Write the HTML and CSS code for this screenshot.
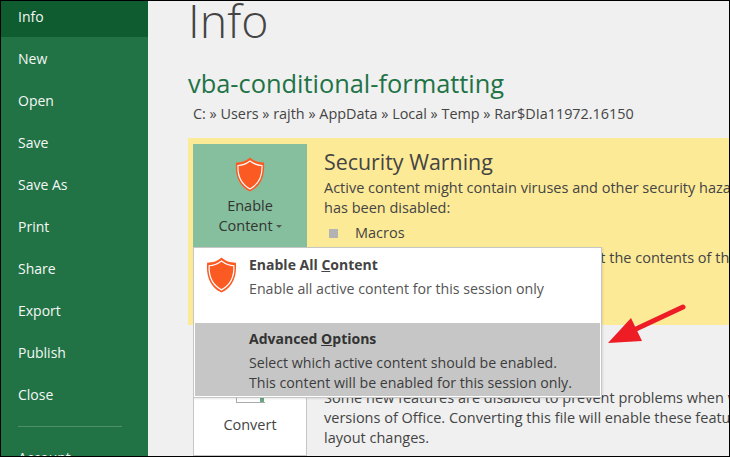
FILE: index.html
```html
<!DOCTYPE html>
<html>

<head>
    <title>Info</title>
    <link rel="stylesheet" href="styles.css">
</head>

<body>
    <div class="frame">
        <div class="sidebar">
            <div class="nav-item active">Info</div>
            <div class="nav-item">New</div>
            <div class="nav-item">Open</div>
            <div class="nav-item">Save</div>
            <div class="nav-item">Save As</div>
            <div class="nav-item">Print</div>
            <div class="nav-item">Share</div>
            <div class="nav-item">Export</div>
            <div class="nav-item">Publish</div>
            <div class="nav-item">Close</div>
            <div class="nav-rule"></div>
            <div class="nav-item">Account</div>
        </div>
        <div class="main">
            <h1 class="title">Info</h1>
            <h2 class="file-name">vba-conditional-formatting</h2>
            <div class="path">C: » Users » rajth » AppData » Local » Temp » Rar$DIa11972.16150</div>

            <div class="banner">
                <div class="enable-btn">
                    <svg class="shield-large" viewBox="0 0 30 35">
                        <path class="shield-fill" d="M15 0.500 C19 4 23 5.500 29 5.500 C30 17 27 29 15 34.500 C3 29 0 17 1 5.500 C7 5.500 11 4 15 0.500 Z" />
                        <path class="shield-line" d="M15 4 C19 7 23 8.500 27 8.500 C27.500 18 25 26.500 15 32 C5 26.500 2.500 18 3 8.500 C7 8.500 11 7 15 4 Z" />
                    </svg>
                    <div class="enable-label">Enable<br>Content<span class="caret"></span></div>
                </div>
                <div class="banner-text">
                    <h3 class="banner-title">Security Warning</h3>
                    <p class="banner-copy">Active content might contain viruses and other security hazards. The following content<br>has been disabled:</p>
                    <div class="bullet"><span class="bullet-box"></span>Macros</div>
                    <p class="banner-copy trust">Only enable this content if you trust the contents of the file.</p>
                </div>
            </div>

            <div class="compat">
                <div class="convert-btn">
                    <div class="convert-icon"><span class="convert-mark"></span></div>
                    <div class="convert-label">Convert</div>
                </div>
                <div class="compat-text">Some new features are disabled to prevent problems when working with older<br>versions of Office. Converting this file will enable these features, but may result in<br>layout changes.</div>
            </div>
        </div>

        <div class="menu">
            <div class="menu-item">
                <svg class="shield-small" viewBox="0 0 30 35">
                    <path class="shield-fill" d="M15 0.500 C19 4 23 5.500 29 5.500 C30 17 27 29 15 34.500 C3 29 0 17 1 5.500 C7 5.500 11 4 15 0.500 Z" />
                    <path class="shield-line" d="M15 4 C19 7 23 8.500 27 8.500 C27.500 18 25 26.500 15 32 C5 26.500 2.500 18 3 8.500 C7 8.500 11 7 15 4 Z" />
                </svg>
                <div class="menu-title">Enable All <u>C</u>ontent</div>
                <div class="menu-desc">Enable all active content for this session only</div>
            </div>
            <div class="menu-item hover">
                <div class="menu-title">Advanced <u>O</u>ptions</div>
                <div class="menu-desc">Select which active content should be enabled.<br>This content will be enabled for this session only.</div>
            </div>
        </div>

        <svg class="arrow" viewBox="0 0 80 45">
            <path d="M75 3 L28 25" />
            <polygon points="0,39 23,14 34,37" />
        </svg>
    </div>
</body>

</html>
```

FILE: styles.css
```css
html,
body {
    height: 100%;
    margin: 0;
    padding: 0;
}

body {
    font-family: "Open Sans", "Noto Sans", sans-serif;
    color: #444;
}

.frame {
    position: relative;
    display: flex;
    box-sizing: border-box;
    width: 730px;
    height: 457px;
    border: 1px solid #000;
    overflow: hidden;
    background-color: #f0f0f0;
}

.sidebar {
    width: 147px;
    flex-shrink: 0;
    background-color: #217346;
    color: #f4f8f5;
    font-size: 14px;
}

.nav-item {
    height: 42px;
    line-height: 42px;
    padding-left: 17px;
}

.nav-item.active {
    height: 36px;
    line-height: 32px;
    margin-bottom: 1px;
    background-color: #0e5c2f;
}

.nav-rule {
    height: 1px;
    margin: 10px 26px 10px 17px;
    background-color: #4d9068;
}

.main {
    flex: 1;
    min-width: 0;
    padding-left: 40px;
}

.title {
    margin: -14px 0 0 0;
    height: 81px;
    font-size: 46.500px;
    line-height: 66px;
    font-weight: 300;
    color: #444;
}

.file-name {
    margin: 0;
    height: 30px;
    font-size: 25.400px;
    line-height: 30px;
    font-weight: 400;
    color: #217346;
    white-space: nowrap;
}

.path {
    margin: 6px 0 0 5px;
    height: 20px;
    font-size: 14.400px;
    line-height: 20px;
    white-space: nowrap;
}

.banner {
    display: flex;
    margin-top: 14px;
    width: 542px;
    height: 187px;
    padding: 6px 0 0 5px;
    box-sizing: border-box;
    background-color: #fdea97;
    overflow: hidden;
}

.enable-btn {
    width: 114px;
    height: 181px;
    flex-shrink: 0;
    background-color: #86bf9d;
    text-align: center;
    color: #333;
    font-size: 14.500px;
    line-height: 20px;
}

.shield-large {
    display: block;
    width: 30px;
    height: 35px;
    margin: 13px auto 4px;
}

.shield-small {
    position: absolute;
    left: 11px;
    top: 8px;
    width: 31px;
    height: 36px;
}

.shield-fill {
    fill: #fb5a22;
}

.shield-line {
    fill: none;
    stroke: #fff;
    stroke-width: 1.200;
}

.caret {
    display: inline-block;
    margin: 0 0 3px 3px;
    border-left: 3px solid transparent;
    border-right: 3px solid transparent;
    border-top: 3px solid #555;
}

.banner-text {
    margin-left: 17px;
    min-width: 0;
    white-space: nowrap;
}

.banner-title {
    margin: 2px 0 0 0;
    font-size: 21.400px;
    line-height: 32px;
    font-weight: 400;
}

.banner-copy {
    margin: 0;
    font-size: 14.500px;
    line-height: 20px;
}

.bullet {
    display: flex;
    align-items: center;
    margin-top: 3px;
    font-size: 14.500px;
    line-height: 24px;
}

.bullet-box {
    width: 9px;
    height: 9px;
    margin: 0 17px 0 5px;
    background-color: #b3b3b3;
}

.trust {
    margin-top: 3px;
    text-indent: 40px;
}

.compat {
    display: flex;
    margin-top: 20px;
}

.convert-btn {
    width: 114px;
    height: 111px;
    margin-left: 5px;
    flex-shrink: 0;
    box-sizing: border-box;
    border: 1px solid #c6c6c6;
    background-color: #fff;
    text-align: center;
}

.convert-icon {
    display: flex;
    justify-content: flex-end;
    align-items: flex-end;
    box-sizing: border-box;
    width: 29px;
    height: 30px;
    margin: 27px auto 0;
    border-bottom: 1px solid #aaa;
    border-left: 1px solid #aaa;
}

.convert-mark {
    width: 4px;
    height: 6px;
    margin-right: 1px;
    background-color: #6aa884;
}

.convert-label {
    margin-top: 12px;
    font-size: 14.500px;
    line-height: 20px;
}

.compat-text {
    margin-left: 17px;
    margin-top: 43px;
    font-size: 14.500px;
    line-height: 20px;
    white-space: nowrap;
}

.menu {
    position: absolute;
    left: 192px;
    top: 246px;
    width: 409px;
    height: 151px;
    box-sizing: border-box;
    border: 1px solid #c6c6c6;
    padding: 1px;
    background-color: #fff;
    box-shadow: 1px 1px 2px rgba(0, 0, 0, 0.1);
}

.menu-item {
    position: relative;
    box-sizing: border-box;
    height: 74px;
    padding: 5px 0 0 54px;
}

.menu-item.hover {
    height: 73px;
    padding-top: 5px;
    background-color: #c6c6c6;
}

.menu-title {
    font-size: 14px;
    line-height: 22px;
    font-weight: 700;
    color: #444;
}

.hover .menu-title {
    color: #333;
}

.menu-desc {
    margin-top: 3px;
    font-size: 14.200px;
    line-height: 20px;
    color: #555;
    white-space: nowrap;
}

.hover .menu-desc {
    margin-top: 3px;
    color: #3c3c3c;
}

.arrow {
    position: absolute;
    left: 607px;
    top: 303px;
    width: 80px;
    height: 45px;
}

.arrow path {
    fill: none;
    stroke: #ee1c25;
    stroke-width: 5;
    stroke-linecap: round;
}

.arrow polygon {
    fill: #ee1c25;
}
```
